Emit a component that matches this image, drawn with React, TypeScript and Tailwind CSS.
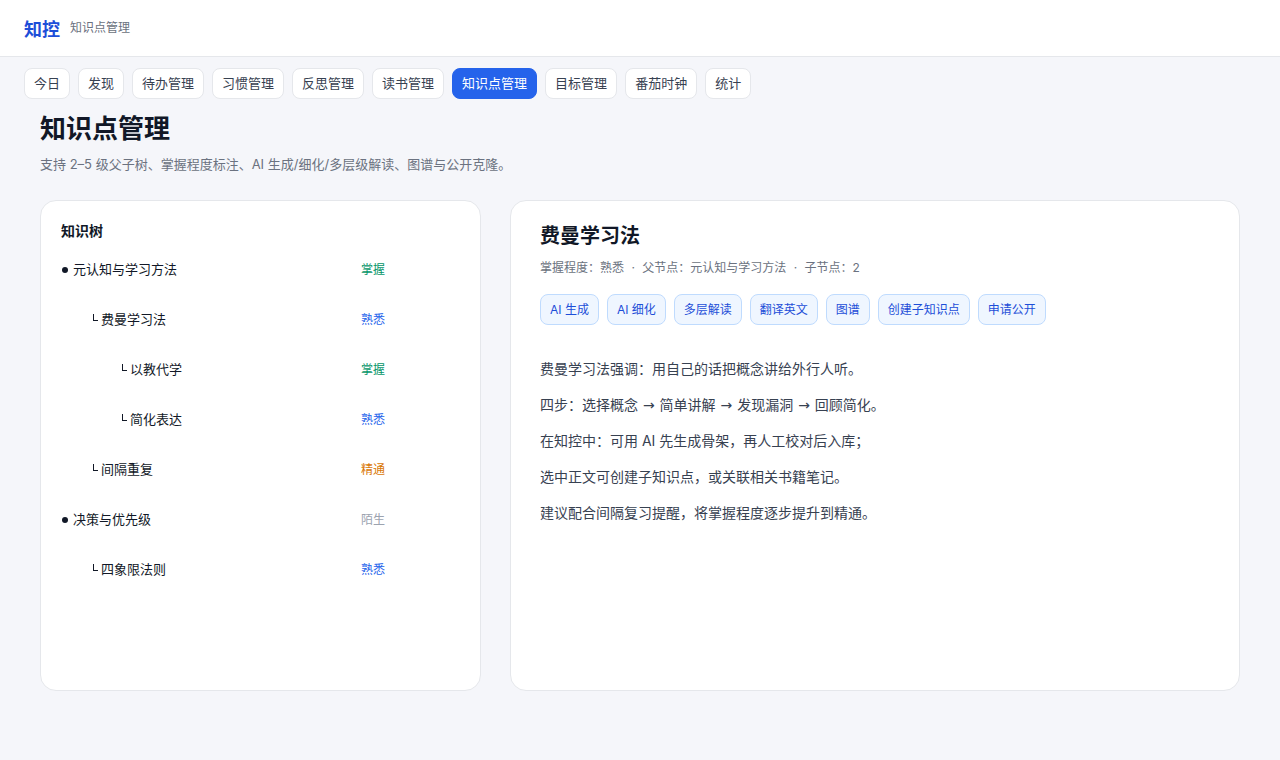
import React from "react";

const tabs = ["今日", "发现", "待办管理", "习惯管理", "反思管理", "读书管理", "知识点管理", "目标管理", "番茄时钟", "统计"];

type Node = { name: string; level: number; m: string };
const tree: Node[] = [
  { name: "元认知与学习方法", level: 0, m: "掌握" },
  { name: "费曼学习法", level: 1, m: "熟悉" },
  { name: "以教代学", level: 2, m: "掌握" },
  { name: "简化表达", level: 2, m: "熟悉" },
  { name: "间隔重复", level: 1, m: "精通" },
  { name: "决策与优先级", level: 0, m: "陌生" },
  { name: "四象限法则", level: 1, m: "熟悉" },
];

const mColor: Record<string, string> = {
  掌握: "text-[#059669]",
  熟悉: "text-[#2563eb]",
  精通: "text-[#d97706]",
  陌生: "text-[#9ca3af]",
};

const indent = ["pl-0", "pl-[29px]", "pl-[58px]"];

const actions = ["AI 生成", "AI 细化", "多层解读", "翻译英文", "图谱", "创建子知识点", "申请公开"];

const Arrow = () => <span className="mx-[1px]" style={{ fontFamily: "'DejaVu Sans', sans-serif" }}>→</span>;

export default function App() {
  return (
    <div
      className="min-h-[760px] bg-[#f5f6fa] text-[#111827]"
      style={{ fontFamily: "Inter, 'Noto Sans CJK SC', 'Noto Sans', sans-serif" }}
    >
      <header className="h-[57px] bg-white border-b border-[#e5e7eb] flex items-center px-6 gap-[10px]">
        <span className="text-[18px] font-bold text-[#1d4ed8] leading-none mt-[3px]">知控</span>
        <span className="text-[12px] text-[#6b7280] leading-none">知识点管理</span>
      </header>

      <nav className="flex gap-2 px-6 pt-[11px]">
        {tabs.map((t) => (
          <div
            key={t}
            className={
              "h-[31px] px-[9px] flex items-center rounded-lg border text-[13px] " +
              (t === "知识点管理"
                ? "bg-[#2563eb] border-[#2563eb] text-white"
                : "bg-white border-[#e5e7eb] text-[#374151]")
            }
          >
            {t}
          </div>
        ))}
      </nav>

      <main className="px-10">
        <h1 className="text-[26px] font-bold leading-[34px] mt-[13px] text-[#111827]">知识点管理</h1>
        <p className="text-[13px] text-[#6b7280] mt-[9px] leading-[18px]">
          支持 2–5 级父子树、掌握程度标注、AI 生成/细化/多层级解读、图谱与公开克隆。
        </p>

        <div className="grid grid-cols-[441px_1fr] gap-[29px] mt-[27px]">
          <section className="h-[491px] bg-white border border-[#e5e7eb] rounded-2xl px-5 pt-[19px]">
            <h2 className="text-[14px] font-bold leading-[22px]">知识树</h2>
            <div className="mt-[3px]">
              {tree.map((n, i) => (
                <div key={i} className="h-[50px] grid grid-cols-[300px_1fr] items-center">
                  <div className={"flex items-center text-[13px] text-[#111827] " + indent[n.level]}>
                    {n.level === 0 ? (
                      <span className="inline-block w-[6px] h-[6px] rounded-full bg-[#111827] ml-[1px] mr-[5px]" />
                    ) : (
                      <span className="inline-block w-[5px] h-[7px] border-l border-b border-[#111827] ml-[3px] mr-[3px] -mt-[5px]" />
                    )}
                    <span>{n.name}</span>
                  </div>
                  <div className={"text-[12px] " + mColor[n.m]}>{n.m}</div>
                </div>
              ))}
            </div>
          </section>

          <section className="h-[491px] bg-white border border-[#e5e7eb] rounded-2xl px-[29px] pt-[21px]">
            <h2 className="text-[20px] font-bold leading-[28px]">费曼学习法</h2>
            <div className="mt-[9px] text-[12px] text-[#6b7280] leading-[18px]">
              掌握程度：熟悉 <span className="mx-[4px]">·</span> 父节点：元认知与学习方法{" "}
              <span className="mx-[4px]">·</span> 子节点：2
            </div>
            <div className="flex gap-2 mt-[17px]">
              {actions.map((a) => (
                <div
                  key={a}
                  className="h-[31px] px-[9px] flex items-center rounded-lg border border-[#bfdbfe] bg-[#eff6ff] text-[12px] text-[#1d4ed8]"
                >
                  {a}
                </div>
              ))}
            </div>
            <div className="mt-[26px] text-[14px] text-[#374151]">
              <p className="leading-[36px]">费曼学习法强调：用自己的话把概念讲给外行人听。</p>
              <p className="leading-[36px]">
                四步：选择概念 <Arrow /> 简单讲解 <Arrow /> 发现漏洞 <Arrow /> 回顾简化。
              </p>
              <p className="leading-[36px]">在知控中：可用 AI 先生成骨架，再人工校对后入库；</p>
              <p className="leading-[36px]">选中正文可创建子知识点，或关联相关书籍笔记。</p>
              <p className="leading-[36px]">建议配合间隔复习提醒，将掌握程度逐步提升到精通。</p>
            </div>
          </section>
        </div>
      </main>
    </div>
  );
}
